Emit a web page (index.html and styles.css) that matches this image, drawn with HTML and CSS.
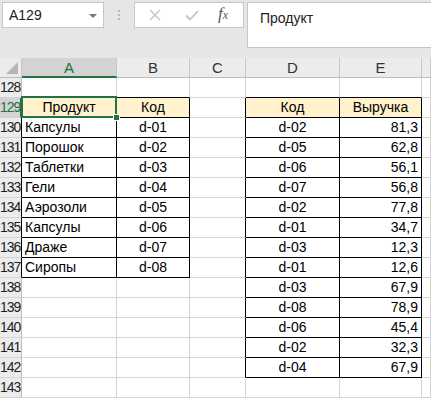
FILE: index.html
```html
<!DOCTYPE html>
<html lang="ru">
<head>
  <meta charset="UTF-8" />
  <meta name="viewport" content="width=device-width, initial-scale=1.0"/>
  <title>Книга1 - Excel</title>
  <link rel="stylesheet" href="styles.css">
</head>
<body>

  <!-- Name box + formula bar -->
  <div class="toolbar">
    <div class="name-box">
      <span>A129</span>
      <svg class="arrow" width="8" height="4" viewBox="0 0 8 4"><path d="M0 0h8L4 4z" fill="#777"/></svg>
    </div>
    <div class="grip"><i></i><i></i><i></i></div>
    <div class="fx-buttons">
      <svg width="12" height="12" viewBox="0 0 12 12"><path d="M1 1l10 10M11 1L1 11" stroke="#c4c4c4" stroke-width="1.4"/></svg>
      <svg width="14" height="12" viewBox="0 0 14 12"><path d="M1 6.5l4 4L13 2" stroke="#c4c4c4" stroke-width="1.8" fill="none"/></svg>
      <span class="fx">f<sub>x</sub></span>
    </div>
    <div class="formula">Продукт</div>
  </div>

  <!-- Sheet -->
  <div class="sheet">
    <div class="hd corner"></div>
    <div class="hd sel">A</div>
    <div class="hd">B</div>
    <div class="hd">C</div>
    <div class="hd">D</div>
    <div class="hd">E</div>
    <div class="hd"></div>

    <div class="rh">128</div>
    <div class="cell eb"></div><div class="cell eb"></div><div class="cell"></div><div class="cell eb"></div><div class="cell eb"></div><div class="cell"></div>

    <div class="rh sel er">129</div>
    <div class="cell t th ct active">Продукт</div><div class="cell t th ct">Код</div><div class="cell er"></div><div class="cell t th ct">Код</div><div class="cell t th ct">Выручка</div><div class="cell"></div>

    <div class="rh er">130</div>
    <div class="cell t">Капсулы</div><div class="cell t ct">d-01</div><div class="cell er"></div><div class="cell t ct">d-02</div><div class="cell t rt">81,3</div><div class="cell"></div>

    <div class="rh er">131</div>
    <div class="cell t">Порошок</div><div class="cell t ct">d-02</div><div class="cell er"></div><div class="cell t ct">d-05</div><div class="cell t rt">62,8</div><div class="cell"></div>

    <div class="rh er">132</div>
    <div class="cell t">Таблетки</div><div class="cell t ct">d-03</div><div class="cell er"></div><div class="cell t ct">d-06</div><div class="cell t rt">56,1</div><div class="cell"></div>

    <div class="rh er">133</div>
    <div class="cell t">Гели</div><div class="cell t ct">d-04</div><div class="cell er"></div><div class="cell t ct">d-07</div><div class="cell t rt">56,8</div><div class="cell"></div>

    <div class="rh er">134</div>
    <div class="cell t">Аэрозоли</div><div class="cell t ct">d-05</div><div class="cell er"></div><div class="cell t ct">d-02</div><div class="cell t rt">77,8</div><div class="cell"></div>

    <div class="rh er">135</div>
    <div class="cell t">Капсулы</div><div class="cell t ct">d-06</div><div class="cell er"></div><div class="cell t ct">d-01</div><div class="cell t rt">34,7</div><div class="cell"></div>

    <div class="rh er">136</div>
    <div class="cell t">Драже</div><div class="cell t ct">d-07</div><div class="cell er"></div><div class="cell t ct">d-03</div><div class="cell t rt">12,3</div><div class="cell"></div>

    <div class="rh er">137</div>
    <div class="cell t">Сиропы</div><div class="cell t ct">d-08</div><div class="cell er"></div><div class="cell t ct">d-01</div><div class="cell t rt">12,6</div><div class="cell"></div>

    <div class="rh">138</div>
    <div class="cell"></div><div class="cell"></div><div class="cell er"></div><div class="cell t ct">d-03</div><div class="cell t rt">67,9</div><div class="cell"></div>

    <div class="rh">139</div>
    <div class="cell"></div><div class="cell"></div><div class="cell er"></div><div class="cell t ct">d-08</div><div class="cell t rt">78,9</div><div class="cell"></div>

    <div class="rh">140</div>
    <div class="cell"></div><div class="cell"></div><div class="cell er"></div><div class="cell t ct">d-06</div><div class="cell t rt">45,4</div><div class="cell"></div>

    <div class="rh">141</div>
    <div class="cell"></div><div class="cell"></div><div class="cell er"></div><div class="cell t ct">d-02</div><div class="cell t rt">32,3</div><div class="cell"></div>

    <div class="rh">142</div>
    <div class="cell"></div><div class="cell"></div><div class="cell er"></div><div class="cell t ct">d-04</div><div class="cell t rt">67,9</div><div class="cell"></div>

    <div class="rh">143</div>
    <div class="cell"></div><div class="cell"></div><div class="cell"></div><div class="cell"></div><div class="cell"></div><div class="cell"></div>
  </div>

</body>
</html>
```

FILE: styles.css
```css
body {
  margin: 0;
  padding: 0;
  font-family: 'Liberation Sans', Arial, sans-serif;
  background: #fff;
  overflow: hidden;
}
.toolbar {
  height: 58px;
  background: #e6e6e6;
  display: flex;
  align-items: flex-start;
  padding: 2px 0 0 2px;
  box-sizing: border-box;
}
.name-box {
  width: 102px;
  height: 26px;
  background: #fff;
  border: 1px solid #c6c6c6;
  box-sizing: border-box;
  display: flex;
  align-items: center;
  justify-content: space-between;
  padding: 0 6px 0 6px;
  font-size: 14px;
  color: #222;
}
.name-box .arrow {
  margin-top: 1px;
}
.grip {
  width: 30px;
  height: 26px;
  display: flex;
  flex-direction: column;
  align-items: center;
  justify-content: center;
  gap: 2px;
}
.grip i {
  width: 2px;
  height: 2px;
  background: #b8b8b8;
}
.fx-buttons {
  width: 110px;
  height: 26px;
  background: #fff;
  border: 1px solid #c6c6c6;
  box-sizing: border-box;
  display: flex;
  align-items: center;
  padding: 0 0 0 14px;
  gap: 24px;
}
.fx {
  font-family: 'Liberation Serif', serif;
  font-style: italic;
  font-size: 17px;
  color: #555;
  margin-left: -5px;
  margin-top: -3px;
}
.fx sub {
  font-size: 12px;
  vertical-align: 0;
}
.formula {
  flex: 1;
  height: 46px;
  margin-left: 3px;
  background: #fff;
  border: 1px solid #c6c6c6;
  border-right: none;
  box-sizing: border-box;
  padding: 7px 0 0 12px;
  font-size: 14px;
  color: #222;
}

/* grid */
.sheet {
  display: grid;
  grid-template-columns: 22px 95px 73px 56px 94px 82px 1fr;
  grid-auto-rows: 20px;
  font-size: 14px;
}
.hd, .rh, .cell {
  box-sizing: border-box;
  border-right: 1px solid #d4d4d4;
  border-bottom: 1px solid #d4d4d4;
  line-height: 19px;
  white-space: nowrap;
  overflow: hidden;
}
.hd {
  background: #ececec;
  border-right-color: #c8c8c8;
  border-bottom-color: #bdbdbd;
  text-align: center;
  color: #333;
  line-height: 20px;
  font-size: 15px;
}
.hd.sel {
  background: #d3d3d3;
  color: #1f6f43;
  border-bottom: 2px solid #217346;
}
.corner {
  position: relative;
}
.corner::after {
  content: "";
  position: absolute;
  right: 3px;
  bottom: 3px;
  border-left: 12px solid transparent;
  border-bottom: 12px solid #b5b5b5;
}
.rh {
  background: #ececec;
  border-right-color: #bdbdbd;
  font-size: 14px;
  letter-spacing: -1px;
  text-align: right;
  color: #222;
  padding-right: 2px;
}
.rh.sel {
  background: #d3d3d3;
  color: #217346;
  border-right: 2px solid #217346;
}
.cell {
  padding: 0 3px;
  color: #000;
}
.t {
  border-right-color: #000;
  border-bottom-color: #000;
}
.th {
  background: #fff2cc;
}
.eb {
  border-bottom-color: #000;
}
.er {
  border-right-color: #000;
}
.rh.sel.er {
  border-right-color: #217346;
}
.ct {
  text-align: center;
}
.rt {
  text-align: right;
}
.active {
  position: relative;
  overflow: visible;
}
.active::before {
  content: "";
  position: absolute;
  top: -2px;
  left: -1px;
  right: -1px;
  bottom: -1px;
  border: 2px solid #217346;
  z-index: 2;
}
.active::after {
  content: "";
  position: absolute;
  right: -4px;
  bottom: -4px;
  width: 5px;
  height: 5px;
  background: #217346;
  border: 1px solid #fff;
  z-index: 3;
}
```
